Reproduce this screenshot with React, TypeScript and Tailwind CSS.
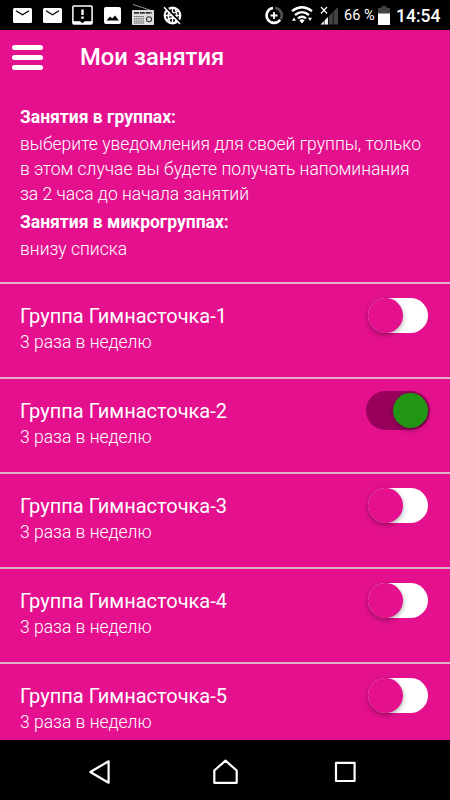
import React from "react";

interface Group {
    title: string;
    schedule: string;
    enabled: boolean;
}

const groups: Group[] = [
    { title: "Группа Гимнасточка-1", schedule: "3 раза в неделю", enabled: false },
    { title: "Группа Гимнасточка-2", schedule: "3 раза в неделю", enabled: true },
    { title: "Группа Гимнасточка-3", schedule: "3 раза в неделю", enabled: false },
    { title: "Группа Гимнасточка-4", schedule: "3 раза в неделю", enabled: false },
    { title: "Группа Гимнасточка-5", schedule: "3 раза в неделю", enabled: false },
];

const MailIcon = () => (
    <svg width="19" height="15" viewBox="0 0 19 15">
        <rect width="19" height="15" rx="1.5" fill="#fff" />
        <path d="M3 2.7 L9.5 6.8 L16 2.7" fill="none" stroke="#000" strokeWidth="1.3" />
    </svg>
);

const AlertIcon = () => (
    <svg width="21" height="20" viewBox="0 0 21 20">
        <rect x="0.9" y="0.9" width="19.2" height="18.2" rx="1" fill="none" stroke="#fff" strokeWidth="1.5" />
        <path d="M1 16.2 H20 V19 H1 Z" fill="#fff" />
        <path d="M8 16 H13 L10.5 18.3 Z" fill="#000" />
        <path d="M10.5 4.5 V10" stroke="#fff" strokeWidth="2.4" />
        <path d="M10.5 11.5 V13.8" stroke="#fff" strokeWidth="2.4" />
    </svg>
);

const PictureIcon = () => (
    <svg width="17" height="17" viewBox="0 0 17 17">
        <rect width="17" height="17" rx="2" fill="#fff" />
        <path d="M2.5 13.5 L6 9.5 L8.2 11.5 L11 8.5 L15 13.5 Z" fill="#000" />
    </svg>
);

const RadioIcon = () => (
    <svg width="22" height="21" viewBox="0 0 22 21">
        <path d="M1 0.5 L18 6" stroke="#aaa" strokeWidth="0.9" />
        <rect y="6" width="22" height="15" rx="0.8" fill="#dedede" />
        <path d="M2 8.9 H20" stroke="#333" strokeWidth="1.7" strokeDasharray="5 0.8" />
        <path d="M2 12.6 H12 M2 14.8 H12 M2 17 H12 M2 19 H12" stroke="#555" strokeWidth="1" strokeDasharray="1.5 0.6" />
        <circle cx="17" cy="15.2" r="2.5" fill="#ddd" stroke="#333" strokeWidth="1.1" />
    </svg>
);

const BallIcon = () => (
    <svg width="19" height="19" viewBox="0 0 19 19">
        <circle cx="9.5" cy="9.5" r="7.8" fill="none" stroke="#fff" strokeWidth="2.2" />
        <path d="M9.5 2 V17 M2 9.5 H17 M4 5 Q9.5 9 15 5 M4 14 Q9.5 10 15 14 M7 2.5 Q3.5 9.5 7 16.5 M12 2.5 Q15.5 9.5 12 16.5" fill="none" stroke="#fff" strokeWidth="1.5" />
        <path d="M2.7 1 L18 17" stroke="#000" strokeWidth="2" />
        <path d="M1 1.2 L17 18" stroke="#fff" strokeWidth="1.5" />
    </svg>
);

const DataSaverIcon = () => (
    <svg width="18" height="19" viewBox="0 0 18 19">
        <path d="M10.3 2 A7.5 7.5 0 0 1 15.7 13.2" fill="none" stroke="#555" strokeWidth="2.6" />
        <path d="M8 2 A7.5 7.5 0 1 0 15.2 13.8" fill="none" stroke="#fff" strokeWidth="2.6" />
        <path d="M9 6 V13 M5.5 9.5 H12.5" stroke="#fff" strokeWidth="1.8" />
    </svg>
);

const WifiIcon = () => (
    <svg width="22" height="18" viewBox="0 0 22 18">
        <path d="M1 5.2 Q11 -2.6 21 5.2 M4 9 Q11 3.2 18 9 M7 12.4 Q11 9 15 12.4" fill="none" stroke="#fff" strokeWidth="2.3" />
        <path d="M8.3 14.2 Q11 12.2 13.7 14.2 L11 17.5 Z" fill="#fff" />
        <path d="M1 14.8 L3 11.5 L5 14.8 Z M17 11.8 H21 L19 15 Z" fill="#fff" />
    </svg>
);

const SignalIcon = () => (
    <svg width="19" height="19" viewBox="0 0 19 19">
        <path d="M8.5 10.5 L18 1 V18.5 H8.5 Z" fill="#444" />
        <path d="M0.5 18.5 L8 11 V18.5 Z" fill="#fff" />
        <path d="M4.2 14 V18.5 M8.4 10 V18.5 M13.2 5 V18.5" stroke="#000" strokeWidth="0.7" />
        <path d="M1 1 L7 7.5 M7 1 L1 7.5" stroke="#fff" strokeWidth="1.2" />
    </svg>
);

const BatteryIcon = () => (
    <svg width="12" height="19" viewBox="0 0 12 19">
        <path d="M3.5 0 H8.5 V2 H12 V8 H0 V2 H3.5 Z" fill="#444" />
        <path d="M0 7.5 H12 V19 H0 Z" fill="#fff" />
    </svg>
);

const StatusBar = () => (
    <div className="flex h-[30px] shrink-0 items-center bg-black pl-[13px] pr-[10px] text-white">
        <div className="flex items-center">
            <MailIcon />
            <div className="ml-[11px]"><MailIcon /></div>
            <div className="ml-[10px]"><AlertIcon /></div>
            <div className="ml-[11px]"><PictureIcon /></div>
            <div className="ml-[11px] pb-[1px]"><RadioIcon /></div>
            <div className="ml-[9px]"><BallIcon /></div>
        </div>
        <div className="ml-auto flex items-center">
            <DataSaverIcon />
            <div className="ml-[8px]"><WifiIcon /></div>
            <div className="ml-[7px]"><SignalIcon /></div>
            <span className="ml-[5px] w-[34px] whitespace-nowrap pt-px text-[14.5px] leading-[30px]">66 %</span>
            <BatteryIcon />
            <span className="ml-[6px] w-[44px] whitespace-nowrap pt-px text-[17.5px] font-medium leading-[30px]">14:54</span>
        </div>
    </div>
);

const Header = () => (
    <header className="flex h-[54px] shrink-0 items-center pl-[12px]">
        <button className="flex w-[31px] flex-col gap-[5px]" aria-label="Меню">
            <span className="h-[5px] rounded-full bg-white" />
            <span className="h-[5px] rounded-full bg-white" />
            <span className="h-[5px] rounded-full bg-white" />
        </button>
        <h1 className="ml-[37px] text-[23.8px] font-medium leading-[54px]">Мои занятия</h1>
    </header>
);

const Toggle = ({ on }: { on: boolean }) =>
    on ? (
        <div className="-mr-[2px] flex h-[39px] w-[64px] items-center justify-end rounded-full bg-[#98005c] pr-[2px]">
            <div className="size-[35px] rounded-full bg-[#229614] shadow-[0_2px_5px_rgba(0,0,0,0.35)]" />
        </div>
    ) : (
        <div className="flex h-[35px] w-[60px] items-center rounded-full bg-white">
            <div className="size-[35px] rounded-full bg-[#e4108e] shadow-[0_2px_5px_rgba(0,0,0,0.35)]" />
        </div>
    );

const GroupRow = ({ group }: { group: Group }) => (
    <li className="flex h-[95px] shrink-0 items-start justify-between border-t-2 border-[#dfb2ca] pl-[20px] pr-[22px]">
        <div className="pt-[18px]">
            <h2 className="text-[20px] leading-[28px]">{group.title}</h2>
            <p className="text-[17.5px] font-light leading-[24px]">{group.schedule}</p>
        </div>
        <div className="flex h-[63px] items-center">
            <Toggle on={group.enabled} />
        </div>
    </li>
);

const NavBar = () => (
    <nav className="flex h-[60px] shrink-0 items-center bg-black pl-[88px] pt-[3px]">
        <svg width="23" height="26" viewBox="0 0 23 26" fill="none" stroke="#fff" strokeWidth="2.2">
            <path d="M20.6 2.3 V23.7 L2.3 13 Z" strokeLinejoin="round" />
        </svg>
        <svg className="ml-[101px]" width="27" height="26" viewBox="0 0 27 26" fill="none" stroke="#fff" strokeWidth="2.2">
            <path d="M2.3 11.5 L13.5 1.7 L24.7 11.5 V23.8 H2.3 Z" strokeLinejoin="round" />
        </svg>
        <svg className="ml-[95px]" width="23" height="22" viewBox="0 0 23 22" fill="none" stroke="#fff" strokeWidth="2.2">
            <rect x="2" y="1.8" width="18.6" height="18.2" strokeLinejoin="round" />
        </svg>
    </nav>
);

export default function App() {
    return (
        <div className="flex h-[800px] w-[450px] flex-col overflow-hidden bg-[#e4108e] font-['Roboto',sans-serif] text-white">
            <StatusBar />
            <Header />
            <main className="flex min-h-0 flex-1 flex-col overflow-hidden">
                <section className="h-[198px] shrink-0 pl-[20px] pt-[21px] text-[17.5px]">
                    <h3 className="mb-[2px] font-bold leading-[25px]">Занятия в группах:</h3>
                    <p className="font-light leading-[25px]">
                        выберите уведомления для своей группы, только
                        <br />
                        в этом случае вы будете получать напоминания
                        <br />
                        за 2 часа до начала занятий
                    </p>
                    <h3 className="font-bold leading-[30px]">Занятия в микрогруппах:</h3>
                    <p className="font-light leading-[25px]">внизу списка</p>
                </section>
                <ul className="flex flex-col">
                    {groups.map((group) => (
                        <GroupRow key={group.title} group={group} />
                    ))}
                </ul>
            </main>
            <NavBar />
        </div>
    );
}
